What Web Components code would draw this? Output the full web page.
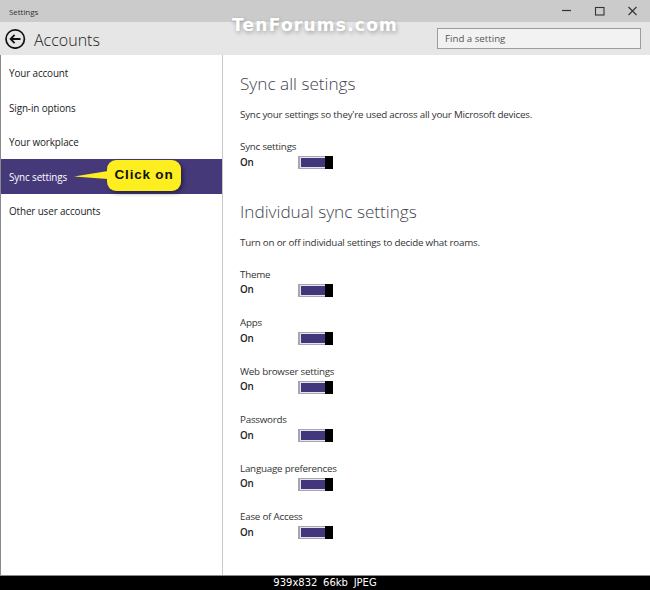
<!DOCTYPE html>
<html><head><meta charset="utf-8"><title>Settings</title>
<style>
html,body{margin:0;padding:0;background:#fff}
body{font-family:"Open Sans","Noto Sans","Liberation Sans",sans-serif;color:#222}
</style></head><body>
<template id="t-window"><style>
:host{display:flex;flex-direction:column;width:650px;height:590px;position:relative;overflow:hidden;background:#fff}
.body{display:flex;flex:1;min-height:0;height:520px;border-left:1px solid #8a8a8a}
.nav{width:221px;border-right:1px solid #c8c8c8;padding-top:.8px;flex:none}
.main{flex:1;padding-left:17px;min-width:0}
</style>
<slot name="title"></slot><slot name="header"></slot>
<div class="body"><div class="nav"><slot name="nav"></slot></div><div class="main"><slot></slot></div></div>
<slot name="footer"></slot><slot name="over"></slot></template>

<template id="t-titlebar"><style>
:host{display:flex;align-items:center;height:22px;background:#cbcbcb;font-size:8px;letter-spacing:-.05px;color:#333;padding-left:9px;flex:none}
.s{flex:1}
svg{display:block}
</style><span><slot></slot></span><span class="s"></span>
<svg width="221" height="22" viewBox="0 0 221 22"><g transform="translate(-429 0)" fill="none" stroke="#333">
<path d="M562 10.5h9" stroke-width="1.2"/><rect x="595.5" y="7.5" width="8.5" height="7.5" stroke-width="1.1"/><path d="M628.5 7l8 8M636.5 7l-8 8" stroke-width="1.1"/></g></svg></template>

<template id="t-header"><style>
:host{display:flex;align-items:center;height:33px;background:#e6e6e6;flex:none;padding-left:5px}
.t{font-size:16px;color:#222;margin-left:8px;font-weight:300;flex:1;line-height:33px;position:relative;top:1.5px}
svg{display:block}
.find{width:195px;height:19px;border:1px solid #9c9c9c;background:#f2f2f2;margin-right:9px;font-size:9.7px;line-height:19px;padding-left:7px;color:#555;box-sizing:content-box}
</style>
<svg width="21" height="21" viewBox="0 0 21 21"><circle cx="10.2" cy="11" r="9.2" fill="none" stroke="#111" stroke-width="1.7"/><path d="M15.5 11H5.8M9.6 6.9l-4 4.1 4 4.1" fill="none" stroke="#111" stroke-width="1.8"/></svg>
<span class="t"><slot></slot></span><span class="find"><slot name="find"></slot></span></template>

<template id="t-nav"><style>
:host{display:flex;align-items:center;height:34.5px;padding-left:8px;font-size:9.9px;letter-spacing:-.12px;color:#222}
:host([selected]){background:#46397a;color:#fff}
</style><slot></slot></template>

<template id="t-toggle"><style>
:host{display:block;height:48.5px}
.l{font-size:9.8px;letter-spacing:-.23px;line-height:17px;height:16px;color:#333}
.r{display:flex;align-items:center;height:16px}
.on{font-size:9.8px;font-weight:600;letter-spacing:-.2px;width:58px;color:#222;line-height:16px;padding-top:1.2px}
.sw{display:flex;width:35px;height:13px;box-sizing:border-box;position:relative;top:.5px}
.tr{flex:1;border:1px solid #a6a6b0;border-left-width:2px;border-right:0;padding:1px 0 1px 1px;background:#e4e4ea;display:flex;box-sizing:border-box}
.tr i{flex:1;background:#43367c}
.th{width:8px;background:#000}
</style><div class="l"><slot></slot></div><div class="r"><span class="on">On</span><span class="sw"><span class="tr"><i></i></span><span class="th"></span></span></div></template>

<template id="t-heading"><style>
:host{display:block;font-size:17.2px;font-weight:300;color:#43434f;line-height:24px}
</style><slot></slot></template>

<template id="t-desc"><style>
:host{display:block;font-size:9.8px;letter-spacing:-.22px;line-height:16px;color:#333}
</style><slot></slot></template>

<template id="t-footer"><style>
:host{display:block;height:14px;background:#000;border-top:1px solid #8a8a8a;color:#fff;text-align:center;font:10px/14px "DejaVu Sans",sans-serif;word-spacing:2.5px;flex:none}
</style><slot></slot></template>

<template id="t-callout"><style>
:host{position:absolute;left:70px;top:158px;width:114px;height:36px;display:block}
svg{position:absolute;left:0;top:0}
.b{position:absolute;left:37px;top:2px;width:74px;height:31px;border-radius:9px;background:#fdee1f;box-shadow:2px 2px 4px rgba(0,0,0,.45);font:bold 13.5px/29px "Liberation Sans",Arial,sans-serif;letter-spacing:.8px;color:#111;text-align:center}
</style><div class="b"><slot></slot></div>
<svg width="50" height="36" viewBox="0 0 50 36"><path d="M4 18.5L38 13v8z" fill="#fdee1f"/></svg></template>

<template id="t-mark"><style>
:host{position:absolute;left:232px;top:13px;font:bold 17px/24px "DejaVu Sans",sans-serif;color:#fff;letter-spacing:1.25px;text-shadow:1px 2px 4px rgba(0,0,0,.3)}
</style><slot></slot></template>

<x-window>
<x-titlebar slot="title">Settings</x-titlebar>
<x-header slot="header">Accounts<span slot="find">Find a setting</span></x-header>
<x-nav slot="nav">Your account</x-nav>
<x-nav slot="nav">Sign-in options</x-nav>
<x-nav slot="nav">Your workplace</x-nav>
<x-nav slot="nav" selected>Sync settings</x-nav>
<x-nav slot="nav">Other user accounts</x-nav>

<x-heading style="margin-top:17px">Sync all setings</x-heading>
<x-desc style="margin-top:11px;margin-bottom:15px">Sync your settings so they're used across all your Microsoft devices.</x-desc>
<x-toggle>Sync settings</x-toggle>
<x-heading style="margin-top:13px">Individual sync settings</x-heading>
<x-desc style="margin-top:11px;margin-bottom:15px">Turn on or off individual settings to decide what roams.</x-desc>
<x-toggle>Theme</x-toggle>
<x-toggle>Apps</x-toggle>
<x-toggle>Web browser settings</x-toggle>
<x-toggle>Passwords</x-toggle>
<x-toggle>Language preferences</x-toggle>
<x-toggle>Ease of Access</x-toggle>

<x-footer slot="footer">939x832  66kb  JPEG</x-footer>
<x-callout slot="over">Click on</x-callout>
<x-mark slot="over">TenForums.com</x-mark>
</x-window>
<script>
for (const [tag, tpl] of [['x-window','t-window'],['x-titlebar','t-titlebar'],['x-header','t-header'],['x-nav','t-nav'],['x-toggle','t-toggle'],['x-heading','t-heading'],['x-desc','t-desc'],['x-footer','t-footer'],['x-callout','t-callout'],['x-mark','t-mark']]) {
  customElements.define(tag, class extends HTMLElement {
    constructor(){ super(); this.attachShadow({mode:'open'}).appendChild(document.getElementById(tpl).content.cloneNode(true)); }
  });
}
</script>
</body></html>
